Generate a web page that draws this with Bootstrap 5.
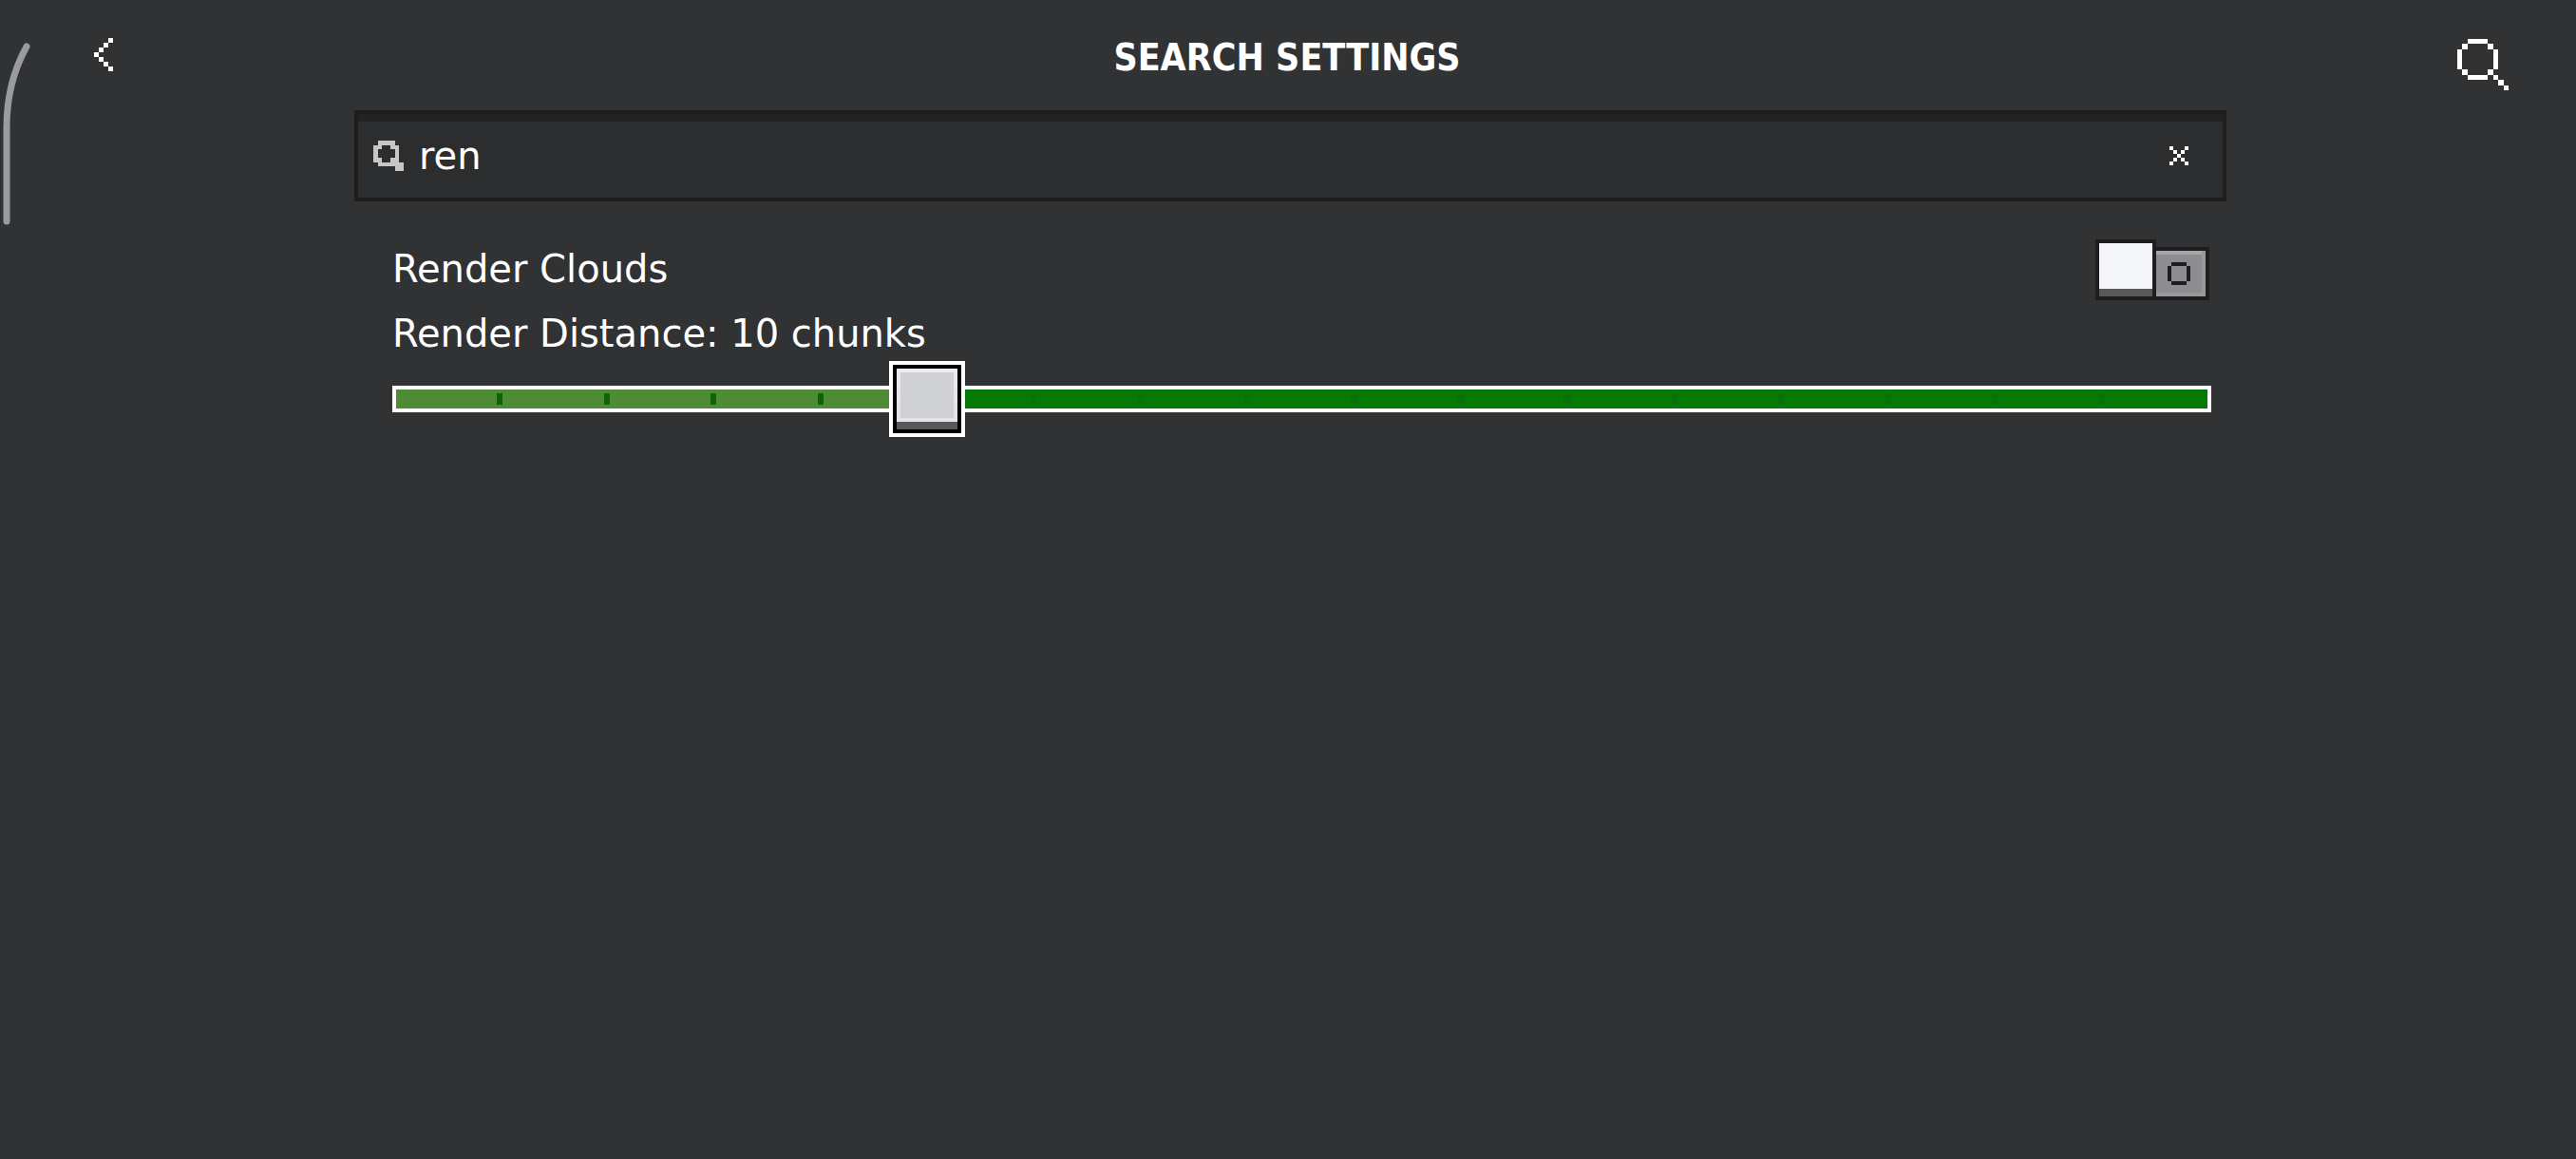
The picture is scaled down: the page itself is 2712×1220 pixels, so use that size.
<!DOCTYPE html>
<html lang="en">
<head>
<meta charset="utf-8">
<meta name="viewport" content="width=device-width, initial-scale=1">
<title>Search Settings</title>
<link href="https://cdn.jsdelivr.net/npm/bootstrap@5.3.0/dist/css/bootstrap.min.css" rel="stylesheet">
<style>
body { background: #313233; color: #fff; font-family: "DejaVu Sans", sans-serif; font-size: 40px; line-height: 48px; }
svg { display: block; shape-rendering: crispEdges; }
.top-bar { height: 116px; padding: 0 71px 0 99px; }
.top-bar h1 { font-family: "DejaVu Sans Condensed", "DejaVu Sans", sans-serif; font-size: 39px; line-height: 48px; font-weight: 700; padding: 37px 0 0 4px; }
.plain-btn { background: none; border: 0; padding: 0; color: inherit; }
.plain-btn.back { padding-top: 40px; }
.plain-btn.find { padding-top: 41px; }
.settings-area { padding: 0 368px 0 373px; }
.search-box { height: 96px; border: 4px solid #1e1e1f; background: #2c2d2e; box-shadow: inset 0 8px #222223; padding: 0 36px 0 16px; }
.search-box svg.lens { color: #c6c6c7; }
.search-box input { background: none; border: 0; outline: 0; color: #fff; padding: 0; height: 48px; min-width: 0; }
.options { padding: 40px 16px 0 40px; }
.toggle-wrap { width: 120px; height: 64px; }
.toggle-wrap input { inset: 0; width: 100%; height: 100%; margin: 0; opacity: 0; z-index: 2; }
.knob { width: 64px; height: 64px; border: 4px solid #1e1e1f; background: #f4f6f9; box-shadow: inset 0 -8px #58585a; }
.off-side { width: 56px; height: 56px; border: 4px solid #1e1e1f; border-left: 0; background: #8c8d90; box-shadow: inset -4px -4px #98999b, inset 0 4px #a6a6a9; color: #1e1e1f; padding-right: 4px; }
.toggle-row { height: 64px; padding-right: 2px; }
.toggle-row label { padding-bottom: 2px; }
.distance-label { margin-top: 11px; }
.slider { height: 80px; margin-top: 5px; grid-template-columns: 100%; }
.slider > * { grid-area: 1 / 1; }
.track { height: 28px; border: 4px solid #fff; background: #067806; }
.track .done { background: #4f8a34; }
.ticks { height: 12px; margin: 0 0 0 4px; }
.ticks i { border-right: 6px solid #0d6408; }
.ticks i:nth-child(n+5) { border-color: #077009; }
.ticks i:last-child { border-color: transparent; }
.slider input { appearance: none; background: none; height: 80px; width: calc(100% + 80px); margin: 0 -40px; z-index: 2; }
.slider input::-webkit-slider-runnable-track { height: 80px; background: none; }
.slider input::-webkit-slider-thumb { appearance: none; width: 80px; height: 80px; border: 4px solid #fff; border-radius: 0;
  background: linear-gradient(#d0d1d4, #d0d1d4) 8px 8px / 56px 48px no-repeat, linear-gradient(#58585a, #58585a) 4px 60px / 64px 8px no-repeat, linear-gradient(#ececee, #e2e2e5) 4px 4px / 64px 56px no-repeat, #000; }
.edge-mark { left: 0; top: 40px; shape-rendering: auto; }
@media (max-width: 1400px) { .settings-area { padding: 0 24px; } .top-bar { padding: 0 24px; } }
</style>
<script src="https://cdn.jsdelivr.net/npm/bootstrap@5.3.0/dist/js/bootstrap.bundle.min.js"></script>
</head>
<body class="min-vh-100">
<svg class="edge-mark position-absolute" width="36" height="204" viewBox="0 0 36 204" fill="none" stroke="#999b9d" stroke-width="7" stroke-linecap="round" aria-hidden="true"><path d="M28 9C13 36 7 64 7 94V193"/></svg>
<header class="top-bar d-flex justify-content-between align-items-start">
  <button class="plain-btn back" type="button" aria-label="Back">
    <svg width="20" height="35" viewBox="0 0 4 7" fill="currentColor"><path d="M3 0h1v1H3zM2 1h1v1H2zM1 2h1v1H1zM0 3h1v1H0zM1 4h1v1H1zM2 5h1v1H2zM3 6h1v1H3z"/></svg>
  </button>
  <h1 class="mb-0">SEARCH SETTINGS</h1>
  <button class="plain-btn find" type="button" aria-label="Search">
    <svg width="54" height="54" viewBox="0 0 10 10" fill="currentColor"><path d="M2 0h4v1H2zM1 1h1v1H1zM6 1h1v1H6zM0 2h1v4H0zM7 2h1v4H7zM1 6h1v1H1zM6 6h1v1H6zM2 7h4v1H2zM7 7h1v1H7zM8 8h1v1H8zM9 9h1v1H9z"/></svg>
  </button>
</header>
<main class="settings-area">
  <div class="search-box d-flex align-items-center">
    <svg class="lens flex-shrink-0" width="32" height="32" viewBox="0 0 32 32" fill="currentColor" aria-hidden="true"><path fill-rule="evenodd" d="M5 0H23V5H27V23H32V32H23V27H5V23H0V5H5zM9 5V9H5V18H9V23H18V18H23V9H18V5z"/></svg>
    <input class="flex-grow-1 ms-3" type="text" value="ren" aria-label="Search settings">
    <button class="plain-btn" type="button" aria-label="Clear search">
      <svg width="20" height="20" viewBox="0 0 5 5" fill="currentColor"><path d="M0 0h1v1H0zM4 0h1v1H4zM1 1h1v1H1zM3 1h1v1H3zM2 2h1v1H2zM1 3h1v1H1zM3 3h1v1H3zM0 4h1v1H0zM4 4h1v1H4z"/></svg>
    </button>
  </div>
  <div class="options">
    <div class="toggle-row d-flex justify-content-between align-items-center">
      <label for="clouds">Render Clouds</label>
      <div class="toggle-wrap d-flex align-items-end position-relative">
        <input class="position-absolute" type="checkbox" role="switch" id="clouds">
        <span class="knob"></span>
        <span class="off-side d-flex align-items-center justify-content-center"><svg width="24" height="24" viewBox="0 0 6 6" fill="currentColor"><path d="M1 0h4v1H1zM0 1h1v4H0zM5 1h1v4H5zM1 5h4v1H1z"/></svg></span>
      </div>
    </div>
    <label class="distance-label d-block" for="distance">Render Distance: 10 chunks</label>
    <div class="slider d-grid align-items-center">
      <div class="track d-flex"><span class="done" style="width:29.4%"></span></div>
      <div class="ticks d-flex"><i class="flex-fill"></i><i class="flex-fill"></i><i class="flex-fill"></i><i class="flex-fill"></i><i class="flex-fill"></i><i class="flex-fill"></i><i class="flex-fill"></i><i class="flex-fill"></i><i class="flex-fill"></i><i class="flex-fill"></i><i class="flex-fill"></i><i class="flex-fill"></i><i class="flex-fill"></i><i class="flex-fill"></i><i class="flex-fill"></i><i class="flex-fill"></i><i class="flex-fill"></i></div>
      <input type="range" id="distance" min="5" max="22" value="10">
    </div>
  </div>
</main>
</body>
</html>
